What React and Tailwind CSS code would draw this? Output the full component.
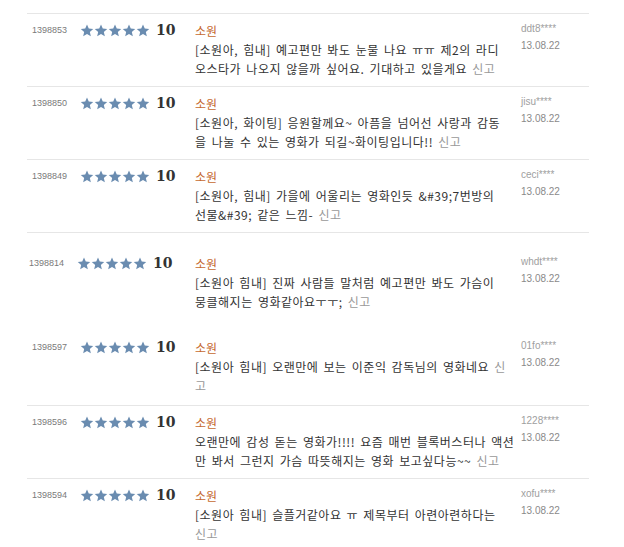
const REVIEWS = [
  {
    id: '1398853',
    lines: ['[소원아, 힘내] 예고편만 봐도 눈물 나요 ㅠㅠ 제2의 라디', '오스타가 나오지 않을까 싶어요. 기대하고 있을게요 '],
    report: '신고',
    user: 'ddt8****',
  },
  {
    id: '1398850',
    lines: ['[소원아, 화이팅] 응원할께요~ 아픔을 넘어선 사랑과 감동', '을 나눌 수 있는 영화가 되길~화이팅입니다!! '],
    report: '신고',
    user: 'jisu****',
  },
  {
    id: '1398849',
    lines: ['[소원아, 힘내] 가을에 어울리는 영화인듯 &#39;7번방의', '선물&#39; 같은 느낌- '],
    report: '신고',
    user: 'ceci****',
  },
  {
    id: '1398814',
    lines: ['[소원아 힘내] 진짜 사람들 말처럼 예고편만 봐도 가슴이', '뭉클해지는 영화같아요ㅜㅜ; '],
    report: '신고',
    user: 'whdt****',
    variant: 'loose-first',
  },
  {
    id: '1398597',
    lines: ['[소원아 힘내] 오랜만에 보는 이준익 감독님의 영화네요 ', ''],
    report: ['신', '고'],
    user: '01fo****',
    variant: 'loose-second',
  },
  {
    id: '1398596',
    lines: ['오랜만에 감성 돋는 영화가!!!! 요즘 매번 블록버스터나 액션', '만 봐서 그런지 가슴 따뜻해지는 영화 보고싶다능~~ '],
    report: '신고',
    user: '1228****',
  },
  {
    id: '1398594',
    lines: ['[소원아 힘내] 슬플거같아요 ㅠ 제목부터 아련아련하다는', ''],
    report: '신고',
    user: 'xofu****',
  },
]

const KR = { fontFamily: '"Noto Sans CJK KR", "Noto Sans", sans-serif' }
const SANS = { fontFamily: '"Liberation Sans", Arial, sans-serif' }

function Star() {
  return (
    <svg width="14" height="13" viewBox="0 0 24 23" className="shrink-0">
      <path
        d="M12 0.8l3.1 7.3 7.9 0.7-6 5.2 1.8 7.7L12 17.6l-6.8 4.1 1.8-7.7-6-5.2 7.9-0.7z"
        fill="#6a8cb0"
      />
    </svg>
  )
}

function Row({ r }) {
  const rowPad =
    r.variant === 'loose-first' ? 'border-t pt-[21px] pb-[8px]' :
    r.variant === 'loose-second' ? 'pt-[19px] pb-[10px]' :
    'border-t pt-[7px] pb-[8px]'
  const shift = r.variant === 'loose-first' ? '-ml-[3px]' : ''
  const report = Array.isArray(r.report) ? r.report : [r.report]

  return (
    <div className={`flex border-[#e6e6e6] ${rowPad}`}>
      {/* 번호 + 별점 */}
      <div className="w-[168px] shrink-0">
        <div className={`flex ${shift}`}>
          <div className="w-[53px] pl-[5px] text-[9px] leading-[19px] text-[#7a7a7a]" style={SANS}>
            {r.id}
          </div>
          <div className="flex items-center h-[19px]">
            <Star /><Star /><Star /><Star /><Star />
            <span
              className="ml-[6px] text-[14px] font-bold text-[#333]"
              style={{ fontFamily: '"DejaVu Serif", Georgia, serif' }}
            >
              10
            </span>
          </div>
        </div>
      </div>

      {/* 내용 */}
      <div className="w-[326px] shrink-0 text-[12px] leading-[19px] text-[#333]" style={KR}>
        <p className="text-[#c5692f]">소원</p>
        <p className="whitespace-nowrap tracking-[0.5px] [word-spacing:2px]">
          {r.lines[0]}
          {report.length > 1 && <span className="text-[#999]">{report[0]}</span>}
        </p>
        <p className="whitespace-nowrap tracking-[0.5px] [word-spacing:2px]">
          {r.lines[1]}
          <span className="text-[#999]">{report[report.length - 1]}</span>
        </p>
      </div>

      {/* 작성자 */}
      <div className="-mt-[1px] text-[10px] leading-[17px]" style={SANS}>
        <p className="text-[#a0a0a0]">{r.user}</p>
        <p className="text-[#8a8a8a]">{r.date || '13.08.22'}</p>
      </div>
    </div>
  )
}

export default function App() {
  return (
    <div className="min-h-[547px] bg-white pt-[13px] pl-[27px]">
      <div className="w-[562px]">
        {REVIEWS.map(r => <Row key={r.id} r={r} />)}
      </div>
    </div>
  )
}
